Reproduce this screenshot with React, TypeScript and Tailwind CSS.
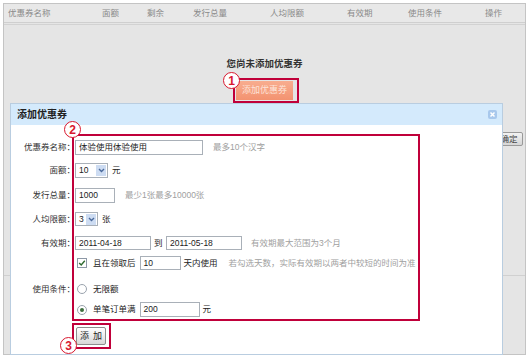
import React from 'react';

const columns = [
  { label: '优惠券名称', cls: 'w-[98px] pl-[4px]' },
  { label: '面额', cls: 'w-[45px]' },
  { label: '剩余', cls: 'w-[46px]' },
  { label: '发行总量', cls: 'w-[77px]' },
  { label: '人均限额', cls: 'w-[77px]' },
  { label: '有效期', cls: 'w-[61px]' },
  { label: '使用条件', cls: 'w-[77px]' },
  { label: '操作', cls: 'flex-1' },
];

const Marker: React.FC<{ n: string; className: string }> = ({ n, className }) => (
  <div
    className={`absolute w-[17px] h-[17px] rounded-full border-[1.5px] border-[#d8182f] bg-white text-[#d8182f] text-[12px] font-bold leading-none flex items-center justify-center ${className}`}
  >
    {n}
  </div>
);

const Input: React.FC<{ value: string; className: string }> = ({ value, className }) => (
  <div className={`h-full border border-[#a9b0b8] bg-white flex items-center px-[3px] text-[8.5px] text-[#222] ${className}`}>
    {value}
  </div>
);

const Select: React.FC<{ value: string; className: string }> = ({ value, className }) => (
  <div className={`h-full border border-[#a9b0b8] bg-white flex items-center justify-between pl-[3px] pr-[1px] text-[8.5px] text-[#222] ${className}`}>
    <span>{value}</span>
    <span className="w-[10px] h-[11px] bg-[#cddcf2] flex items-center justify-center">
      <svg width="7" height="5" viewBox="0 0 7 5">
        <path d="M1 1 L3.5 3.5 L6 1" fill="none" stroke="#4a6a9c" strokeWidth="1.4" />
      </svg>
    </span>
  </div>
);

const Hint: React.FC<{ children: React.ReactNode; className?: string }> = ({ children, className = '' }) => (
  <span className={`text-[#a0a0a0] text-[8.5px] ${className}`}>{children}</span>
);

const Radio: React.FC<{ checked?: boolean }> = ({ checked }) => (
  <span className="ml-[2px] w-[10px] h-[10px] rounded-full border border-[#9aa3ad] bg-white flex items-center justify-center">
    {checked && <span className="w-[4px] h-[4px] rounded-full bg-[#3d6e3d]" />}
  </span>
);

const Row: React.FC<{ label?: string; className: string; children: React.ReactNode }> = ({ label, className, children }) => (
  <div className={`flex items-center ${className}`}>
    <div className="w-[64px] shrink-0 text-right text-[8.5px] text-[#333]">{label}</div>
    <div className="flex items-center h-full">{children}</div>
  </div>
);

export default function App() {
  return (
    <div className="relative w-[530px] h-[357px] overflow-hidden bg-white font-[family-name:'Liberation_Sans','Noto_Sans_CJK_SC',sans-serif] leading-none">
      {/* underlying page */}
      <div className="ml-[3px] mt-[3px] w-[523px] h-[352px] border border-[#c4c4c4] bg-[#e5e5e5] flex flex-col">
        <div className="h-[19px] border-b border-[#cfcfcf] bg-[#e8e8e8] flex items-center text-[8.5px] text-[#8a8a8a]">
          {columns.map((c) => (
            <div key={c.label} className={c.cls}>{c.label}</div>
          ))}
        </div>
        <div className="mt-[1px] h-[1px] bg-[#d2d2d2]" />

        <div className="mt-[33px] text-center text-[9.5px] font-bold text-[#333] h-[12px] flex items-center justify-center">
          您尚未添加优惠券
        </div>
        <div className="mt-[11px] flex justify-center">
          <div className="w-[57px] h-[19px] bg-gradient-to-b from-[#f8ad8f] to-[#f39270] flex items-center justify-center text-[9px] text-[#fde3d8]">
            添加优惠券
          </div>
        </div>

        <div className="mt-[32px] flex justify-end pr-[2px]">
          <div className="w-[28px] h-[14px] border border-[#9a9a9a] rounded-[2px] bg-gradient-to-b from-[#f2f2f2] to-[#d6d6d6] flex items-center justify-center text-[8.5px] text-[#444]">
            确定
          </div>
        </div>
        <div className="mt-[129px] border-t border-[#d0d0d0]" />
      </div>

      {/* dialog */}
      <div className="absolute left-[10px] top-[103px] w-[493px] h-[252px] border border-[#b9cde0] bg-white flex flex-col">
        <div className="h-[21px] bg-[#d4eafc] flex items-center justify-between pl-[6px] pr-[5px]">
          <span className="text-[10px] font-bold text-[#222]">添加优惠券</span>
          <span className="w-[9px] h-[9px] rounded-[2px] bg-[#a8c8ec] flex items-center justify-center">
            <svg width="7" height="7" viewBox="0 0 7 7">
              <path d="M1.5 1.5 L5.5 5.5 M5.5 1.5 L1.5 5.5" stroke="#fff" strokeWidth="1.5" />
            </svg>
          </span>
        </div>

        <div className="flex flex-col pt-[15px]">
          <Row label="优惠券名称：" className="h-[15px]">
            <Input value="体验使用体验使用" className="w-[128px]" />
            <Hint className="ml-[10px]">最多10个汉字</Hint>
          </Row>
          <Row label="面额：" className="h-[15px] mt-[8px]">
            <Select value="10" className="w-[33px]" />
            <span className="ml-[4px] text-[8.5px] text-[#222]">元</span>
          </Row>
          <Row label="发行总量：" className="h-[15px] mt-[10px]">
            <Input value="1000" className="w-[40px]" />
            <Hint className="ml-[10px]">最少1张最多10000张</Hint>
          </Row>
          <Row label="人均限额：" className="h-[14px] mt-[9px]">
            <Select value="3" className="w-[23px]" />
            <span className="ml-[4px] text-[8.5px] text-[#222]">张</span>
          </Row>
          <Row label="有效期：" className="h-[14px] mt-[10px]">
            <Input value="2011-04-18" className="w-[76px]" />
            <span className="mx-[3px] w-[9px] text-[8.5px] text-[#222]">到</span>
            <Input value="2011-05-18" className="w-[76px]" />
            <Hint className="ml-[9px]">有效期最大范围为3个月</Hint>
          </Row>
          <Row className="h-[14px] mt-[6px]">
            <span className="ml-[2px] w-[10px] h-[10px] border border-[#8d98a6] bg-white flex items-center justify-center">
              <svg width="8" height="8" viewBox="0 0 8 8">
                <path d="M1.2 4 L3.2 6 L6.8 1.8" fill="none" stroke="#2f6b2f" strokeWidth="1.4" />
              </svg>
            </span>
            <span className="ml-[6px] text-[8.5px] text-[#222]">且在领取后</span>
            <Input value="10" className="ml-[4px] w-[41px]" />
            <span className="ml-[3px] text-[8.5px] text-[#222]">天内使用</span>
            <Hint className="ml-[11px]">若勾选天数，实际有效期以两者中较短的时间为准</Hint>
          </Row>
          <Row label="使用条件：" className="h-[14px] mt-[12px]">
            <Radio />
            <span className="ml-[6px] text-[8.5px] text-[#222]">无限额</span>
          </Row>
          <Row className="h-[15px] mt-[6px]">
            <Radio checked />
            <span className="ml-[6px] text-[8.5px] text-[#222]">单笔订单满</span>
            <Input value="200" className="ml-[4px] w-[60px]" />
            <span className="ml-[3px] text-[8.5px] text-[#222]">元</span>
          </Row>
          <div className="mt-[10px] ml-[65px] w-[30px] h-[18px] border border-[#8d8d8d] rounded-[2px] bg-gradient-to-b from-white to-[#d8d8d8] flex items-center justify-center gap-[4px] text-[9px] text-[#222]">
            <span>添</span>
            <span>加</span>
          </div>
        </div>
      </div>

      {/* annotations */}
      <div className="absolute left-[233px] top-[78px] w-[66px] h-[25px] border-2 border-[#c0003a]" />
      <div className="absolute left-[72px] top-[134px] w-[348px] h-[187px] border-2 border-[#c0003a]" />
      <div className="absolute left-[72px] top-[323px] w-[39px] h-[26px] border-2 border-[#c0003a]" />
      <Marker n="1" className="left-[223px] top-[72px]" />
      <Marker n="2" className="left-[64px] top-[121px]" />
      <Marker n="3" className="left-[60px] top-[337px]" />
    </div>
  );
}
